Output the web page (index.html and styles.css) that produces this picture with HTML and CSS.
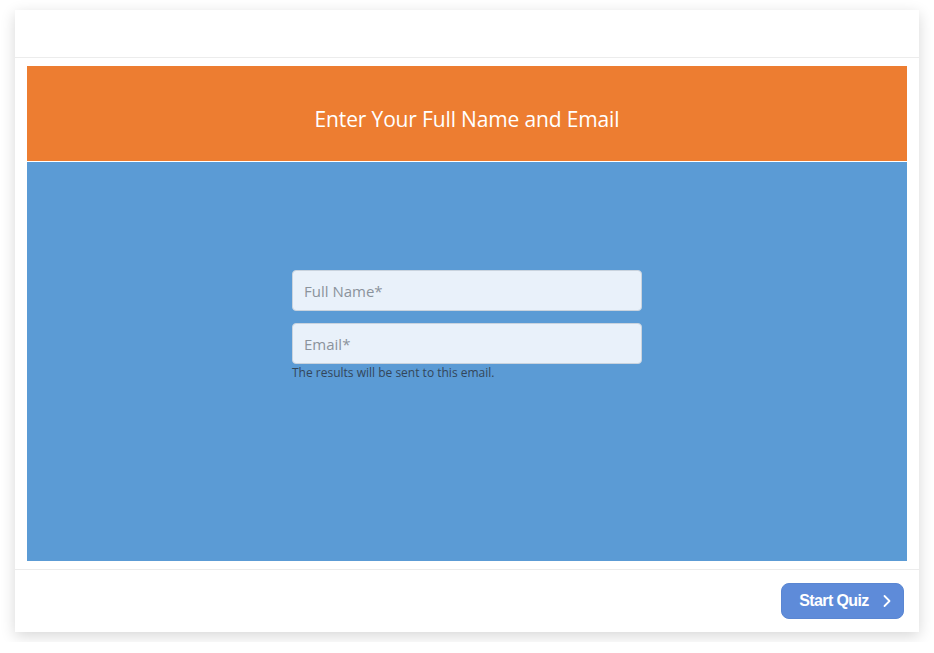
FILE: index.html
```html
<!DOCTYPE html>
<html lang="en">
<head>
<meta charset="utf-8">
<title>Quiz</title>
<link rel="stylesheet" href="styles.css">
</head>
<body>
<div class="card">
  <div class="card-header"></div>
  <div class="card-body">
    <div class="title-band">
      <h1 class="title">Enter Your Full Name and Email</h1>
    </div>
    <div class="form-area">
      <form class="form">
        <input class="field" type="text" placeholder="Full Name*">
        <div class="email-group">
          <input class="field" type="email" placeholder="Email*">
          <p class="hint">The results will be sent to this email.</p>
        </div>
      </form>
    </div>
  </div>
  <div class="card-footer">
    <button class="start-btn" type="button">Start Quiz
      <svg class="chev" width="10" height="14" viewBox="0 0 10 14"><path d="M2.5 2 L7.5 7 L2.5 12" fill="none" stroke="#fff" stroke-width="1.8" stroke-linecap="round" stroke-linejoin="round"/></svg>
    </button>
  </div>
</div>
</body>
</html>
```
FILE: styles.css
```css
html, body {
  margin: 0;
  padding: 0;
  background: #ffffff;
}
body {
  padding: 10px 15px;
  font-family: "Open Sans", "Noto Sans", sans-serif;
}
.card {
  width: 904px;
  height: 622px;
  background: #ffffff;
  box-shadow: 0 4px 14px rgba(0, 0, 0, 0.16);
  display: flex;
  flex-direction: column;
}
.card-header {
  height: 47px;
  border-bottom: 1px solid #ececec;
  flex: none;
}
.card-body {
  padding: 8px 12px 8px;
  display: flex;
  flex-direction: column;
  flex: none;
}
.title-band {
  height: 96px;
  box-sizing: border-box;
  padding-top: 10px;
  background: #ed7d31;
  border-bottom: 1px solid #ffffff;
  display: flex;
  align-items: center;
  justify-content: center;
}
.title {
  margin: 0;
  font-family: "Open Sans", "Noto Sans", sans-serif;
  font-weight: 400;
  font-size: 21px;
  color: #ffffff;
  letter-spacing: -0.15px;
}
.form-area {
  height: 399px;
  background: #5b9bd5;
  display: flex;
  justify-content: center;
  padding-top: 108px;
  box-sizing: border-box;
}
.form {
  width: 350px;
  display: flex;
  flex-direction: column;
  gap: 12px;
}
.field {
  box-sizing: border-box;
  width: 350px;
  height: 41px;
  margin: 0;
  padding: 0 11px;
  background: #e9f1fa;
  border: 1px solid #c9d3de;
  border-radius: 4px;
  font-family: "Open Sans", "Noto Sans", sans-serif;
  font-size: 15px;
  color: #333;
  outline: none;
}
.field::placeholder {
  color: #8b939c;
}
.hint {
  margin: 1px 0 0;
  font-size: 12px;
  line-height: 16px;
  color: #33465a;
}
.card-footer {
  border-top: 1px solid #ececec;
  flex: 1;
  display: flex;
  align-items: center;
  justify-content: flex-end;
  padding-right: 15px;
}
.start-btn {
  width: 123px;
  height: 36px;
  background: #5e8bd9;
  border: 1px solid #5a86d2;
  border-radius: 8px;
  color: #ffffff;
  font-family: "Liberation Sans", Arial, sans-serif;
  font-weight: 700;
  font-size: 16px;
  letter-spacing: -0.6px;
  display: flex;
  align-items: center;
  justify-content: center;
  gap: 13px;
  padding: 0 0 0 6px;
  cursor: pointer;
}
.chev {
  display: block;
}
```
